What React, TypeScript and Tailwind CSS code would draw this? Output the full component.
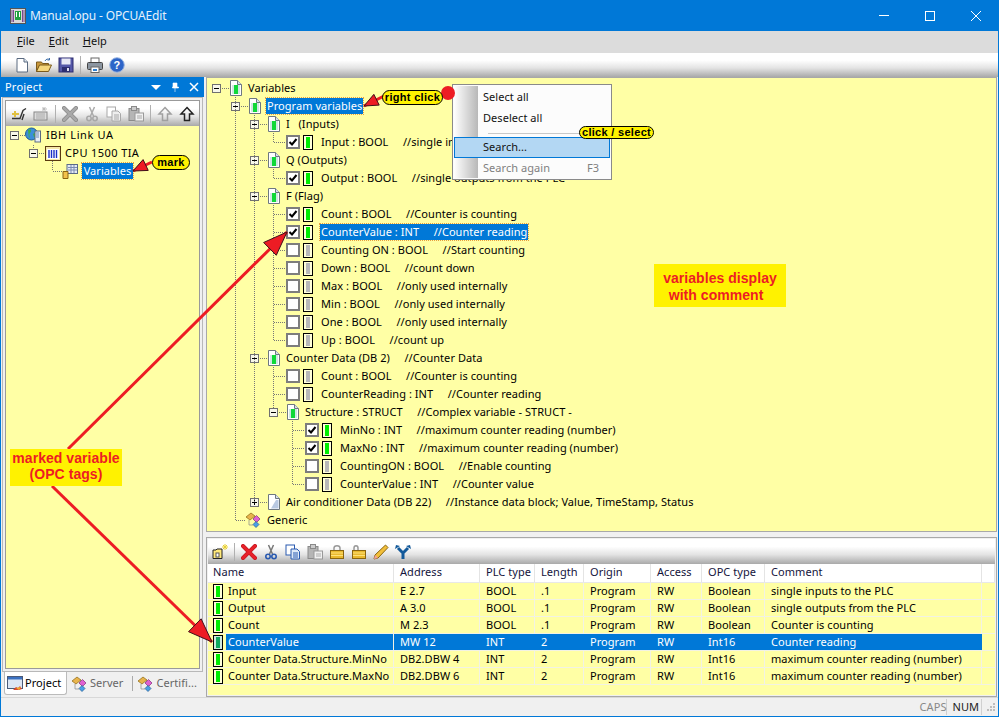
import React from "react";

const Y = "bg-[#ffffa5]";
const TB = "bg-[linear-gradient(180deg,#ffffff_0%,#ffffff_30%,#e4e4e4_62%,#a9a9a9_100%)]";

function Svg({ children, className = "w-4 h-4 shrink-0" }: { children: React.ReactNode; className?: string }) {
  return <svg viewBox="0 0 16 16" className={className}>{children}</svg>;
}

const NewIc = () => (
  <Svg><path d="M3 1.500h7l3.500 3.500v10H3z" fill="#fff" stroke="#5a6a80" /><path d="M10 1.500V5h3.500" fill="#dfe8f2" stroke="#5a6a80" /></Svg>
);
const OpenIc = () => (
  <Svg><path d="M.5 5h5l1 1.500h6v2h-9l-3 6z" fill="#c9973a" stroke="#7a5a1c" /><path d="M.5 14.500l3-6.500h12l-3 6.500z" fill="#f5d67b" stroke="#7a5a1c" /><path d="M9 4c1-2 3-2.500 4.500-1.500M13.500 1v2h-2" fill="none" stroke="#3f6fa8" /></Svg>
);
const SaveIc = () => (
  <Svg><rect x="1" y="1" width="14" height="14" fill="#5558a8" stroke="#2c2d70" /><rect x="3.500" y="1.500" width="9" height="6" fill="#e8e8f4" /><rect x="4" y="10" width="8" height="5" fill="#2c2d70" /><rect x="9" y="11" width="2" height="3" fill="#dde" /></Svg>
);
const PrintIc = () => (
  <Svg><rect x="4" y="1" width="8" height="5" fill="#fff" stroke="#666" /><rect x=".5" y="5.500" width="15" height="7" rx="1" fill="#8b95a0" stroke="#444" /><rect x="4" y="10" width="8" height="5.500" fill="#fff" stroke="#666" /><rect x="6" y="12" width="4" height="2" fill="#2e7fd0" /></Svg>
);
const HelpIc = () => (
  <Svg><circle cx="8" cy="8" r="7.300" fill="#2c64c8" stroke="#9db6e0" /><text x="8" y="12" textAnchor="middle" fontSize="11" fontWeight="700" fontFamily="Liberation Sans" fill="#fff">?</text></Svg>
);
const ConnectIc = () => (
  <Svg><path d="M1 8h7M4 5v6" stroke="#e0c040" strokeWidth="2" /><path d="M1 12.500h8l3-8 3-2M11 14l2-6" stroke="#333" strokeWidth="1.400" fill="none" /></Svg>
);
const GreyNewIc = () => (
  <Svg><rect x="1" y="6" width="13" height="8" fill="#ddd" stroke="#888" /><path d="M3 8h9M3 10h9M3 12h9" stroke="#aaa" /><path d="M11 1v4M9 3h5M9.500 1.500l3 3M12.500 1.500l-3 3" stroke="#bbb" /></Svg>
);
const XIc = ({ c = "#a8a8a8", d = "#888" }: { c?: string; d?: string }) => (
  <Svg><path d="M2 2l12 12M14 2L2 14" stroke={d} strokeWidth="4" strokeLinecap="round" /><path d="M2 2l12 12M14 2L2 14" stroke={c} strokeWidth="2.600" strokeLinecap="round" /></Svg>
);
const ScissorsIc = ({ c = "#a8a8a8" }: { c?: string }) => (
  <Svg><path d="M5.500 1l4 9M10.500 1l-4 9" stroke={c === "#a8a8a8" ? "#aaa" : "#777"} strokeWidth="1.500" /><circle cx="5" cy="12.500" r="2.200" fill="none" stroke={c} strokeWidth="1.600" /><circle cx="11" cy="12.500" r="2.200" fill="none" stroke={c} strokeWidth="1.600" /></Svg>
);
const CopyIc = ({ c = "#a8a8a8", f = "#eee" }: { c?: string; f?: string }) => (
  <Svg><rect x="1" y="1" width="8.500" height="10" fill="#fff" stroke={c} /><path d="M6 5h6l2.500 2.500V15H6z" fill={f} stroke={c} /><path d="M8 9h5M8 11h5M8 13h5" stroke={c} /></Svg>
);
const PasteIc = () => (
  <Svg><rect x="1" y="2.500" width="10" height="12" fill="#b5b5b5" stroke="#8a8a8a" /><rect x="3.500" y=".5" width="5" height="4" fill="#ccc" stroke="#8a8a8a" /><rect x="7" y="7" width="8.500" height="8" fill="#f0f0f0" stroke="#999" /><path d="M9 10h5M9 12h5" stroke="#aaa" /></Svg>
);
const UpIc = ({ c = "#a0a0a0", f = "none" }: { c?: string; f?: string }) => (
  <Svg><path d="M8 1.500L14 8h-3.500v6.500h-5V8H2z" fill={f} stroke={c} strokeWidth="1.500" /></Svg>
);
const NewFolderIc = () => (
  <Svg><path d="M1 6h3l1-1h5v9.500H1z" fill="#ffe97a" stroke="#222" /><rect x="4" y="9" width="3" height="4" fill="#fff" stroke="#555" /><path d="M13 0v6M10 3h6M11 1l4 4M15 1l-4 4" stroke="#e8d030" /></Svg>
);
const LockIc = ({ open = false }: { open?: boolean }) => (
  <Svg><path d={open ? "M3 7V4c0-3 4-3 4 0v3" : "M5 7V4c0-3 6-3 6 0v3"} fill="none" stroke="#999" strokeWidth="1.500" /><rect x="1.500" y="6.500" width="13" height="8" fill="#e9b92d" stroke="#8a6510" /><path d="M2 9h12M2 11.500h12" stroke="#ffe27a" /></Svg>
);
const PencilIc = () => (
  <Svg><path d="M12.500 1L15 3.500 5 14l-4 1 1-4z" fill="#f2bf3a" stroke="#8a6510" /><path d="M2 11l3 3-4 1z" fill="#f0a0a0" /></Svg>
);
const ForkIc = () => (
  <Svg><path d="M8 15V9L3 4M8 9l5-5" stroke="#12599a" strokeWidth="3" fill="none" /><path d="M0 5l1-4 4 1zM16 5l-1-4-4 1z" fill="#12599a" /></Svg>
);
const TriDown = () => <div className="w-0 h-0 border-x-[5px] border-x-transparent border-t-[5px] border-t-white" />;

const TreeDoc = ({ green = true }: { green?: boolean }) => (
  <svg viewBox="0 0 12 16" className="w-[12px] h-[16px] shrink-0">
    <path d="M.5.5h7l4 4v11H.5z" fill="#fff" stroke="#6e7880" />
    <path d="M7.500.5v4h4" fill="#d8e0ea" stroke="#6e7880" />
    {green ? (
      <>
        <rect x="2" y="5" width="8" height="9" fill="#cfe7e3" />
        <rect x="4" y="5" width="4" height="9" fill="#10d838" />
      </>
    ) : (
      <path d="M8 6h2.500v8.500H3z" fill="#b9c9e2" />
    )}
  </svg>
);

const Expander = ({ plus = false }: { plus?: boolean }) => (
  <div className="relative w-[9px] h-[9px] shrink-0 border border-[#707070] bg-[#f7f7ea]">
    <div className="absolute left-[1px] right-[1px] top-[3px] h-[1px] bg-black" />
    {plus && <div className="absolute top-[1px] bottom-[1px] left-[3px] w-[1px] bg-black" />}
  </div>
);

const Check = ({ on }: { on: boolean }) => (
  <div className="w-[14px] h-[14px] shrink-0 border-[2px] border-[#7d7d7d] bg-white flex items-center justify-center">
    {on && (
      <svg viewBox="0 0 10 10" className="w-[10px] h-[10px]"><path d="M1.500 5l2.500 2.500L8.500 2" fill="none" stroke="#000" strokeWidth="2" /></svg>
    )}
  </div>
);

const VarBox = ({ on, selected }: { on: boolean; selected?: boolean }) => (
  <div className={`w-[10px] h-[15px] shrink-0 border border-black flex justify-center py-[1px] ${selected ? "bg-[#cfe9e0]" : "bg-[#ffffd8]"}`}>
    <div className={`w-[4px] ${selected ? "bg-[#0fa860]" : on ? "bg-[#00ee00]" : "bg-[#b8b8b8]"}`} />
  </div>
);

type Row =
  | { t: "node"; pl: string; text: string; selected?: boolean; plus?: boolean; plain?: boolean }
  | { t: "leaf"; pl: string; text: string; on: boolean; selected?: boolean }
  | { t: "generic"; pl: string; text: string };

const L0 = "pl-[5px]";
const L1 = "pl-[24px]";
const L2 = "pl-[43px]";
const L3 = "pl-[62px]";
const LA = "pl-[79px]";
const LB = "pl-[98px]";

const rows: Row[] = [
  { t: "node", pl: L0, text: "Variables" },
  { t: "node", pl: L1, text: "Program variables", selected: true },
  { t: "node", pl: L2, text: "I   (Inputs)" },
  { t: "leaf", pl: LA, text: "Input : BOOL     //single inputs to the PLC", on: true },
  { t: "node", pl: L2, text: "Q (Outputs)" },
  { t: "leaf", pl: LA, text: "Output : BOOL     //single outputs from the PLC", on: true },
  { t: "node", pl: L2, text: "F (Flag)" },
  { t: "leaf", pl: LA, text: "Count : BOOL     //Counter is counting", on: true },
  { t: "leaf", pl: LA, text: "CounterValue : INT     //Counter reading", on: true, selected: true },
  { t: "leaf", pl: LA, text: "Counting ON : BOOL     //Start counting", on: false },
  { t: "leaf", pl: LA, text: "Down : BOOL     //count down", on: false },
  { t: "leaf", pl: LA, text: "Max : BOOL     //only used internally", on: false },
  { t: "leaf", pl: LA, text: "Min : BOOL     //only used internally", on: false },
  { t: "leaf", pl: LA, text: "One : BOOL     //only used internally", on: false },
  { t: "leaf", pl: LA, text: "Up : BOOL     //count up", on: false },
  { t: "node", pl: L2, text: "Counter Data (DB 2)     //Counter Data" },
  { t: "leaf", pl: LA, text: "Count : BOOL     //Counter is counting", on: false },
  { t: "leaf", pl: LA, text: "CounterReading : INT     //Counter reading", on: false },
  { t: "node", pl: L3, text: "Structure : STRUCT     //Complex variable - STRUCT -" },
  { t: "leaf", pl: LB, text: "MinNo : INT     //maximum counter reading (number)", on: true },
  { t: "leaf", pl: LB, text: "MaxNo : INT     //maximum counter reading (number)", on: true },
  { t: "leaf", pl: LB, text: "CountingON : BOOL     //Enable counting", on: false },
  { t: "leaf", pl: LB, text: "CounterValue : INT     //Counter value", on: false },
  { t: "node", pl: L2, text: "Air conditioner Data (DB 22)     //Instance data block; Value, TimeStamp, Status", plus: true, plain: true },
  { t: "generic", pl: "pl-[39px]", text: "Generic" },
];

const TreeText = ({ text, selected }: { text: string; selected?: boolean }) => (
  <span className={`h-[16px] leading-[16px] px-[1px] whitespace-pre ${selected ? "bg-[#0078d7] text-white outline outline-1 outline-dotted outline-[#e8a040]" : "text-black"}`}>{text}</span>
);

const GenericIc = () => (
  <svg viewBox="0 0 16 16" className="w-4 h-4 shrink-0">
    <path d="M0 5l5-4 4 3-5 4z" fill="#e9b44c" stroke="#8a6510" strokeWidth=".7" />
    <path d="M7 7l3.500-3.500L14 7l-3.500 3.500z" fill="#e060d0" stroke="#80307a" strokeWidth=".7" />
    <path d="M7 12.500l3-3 3 3-3 3z" fill="#4aa0e8" stroke="#205a90" strokeWidth=".7" />
    <path d="M3 8v5h4" fill="none" stroke="#888" strokeWidth=".7" />
  </svg>
);

const listRows = [
  ["Input", "E 2.7", "BOOL", ".1", "Program", "RW", "Boolean", "single inputs to the PLC"],
  ["Output", "A 3.0", "BOOL", ".1", "Program", "RW", "Boolean", "single outputs from the PLC"],
  ["Count", "M 2.3", "BOOL", ".1", "Program", "RW", "Boolean", "Counter is counting"],
  ["CounterValue", "MW 12", "INT", "2", "Program", "RW", "Int16", "Counter reading"],
  ["Counter Data.Structure.MinNo", "DB2.DBW 4", "INT", "2", "Program", "RW", "Int16", "maximum counter reading (number)"],
  ["Counter Data.Structure.MaxNo", "DB2.DBW 6", "INT", "2", "Program", "RW", "Int16", "maximum counter reading (number)"],
];
const COLS = "grid grid-cols-[186px_86px_55px_49px_67px_51px_63px_217px_1fr]";
const heads = ["Name", "Address", "PLC type", "Length", "Origin", "Access", "OPC type", "Comment", ""];

function head(x1: number, y1: number, x2: number, y2: number, len: number, w: number) {
  const a = Math.atan2(y2 - y1, x2 - x1);
  const bx = x2 - Math.cos(a) * len;
  const by = y2 - Math.sin(a) * len;
  const nx = -Math.sin(a) * w;
  const ny = Math.cos(a) * w;
  return `${x2},${y2} ${bx + nx},${by + ny} ${bx - nx},${by - ny}`;
}

const Arrow = ({ x1, y1, x2, y2, len = 24, w = 9, sw = 3 }: { x1: number; y1: number; x2: number; y2: number; len?: number; w?: number; sw?: number }) => (
  <g>
    <line x1={x1} y1={y1} x2={x2} y2={y2} stroke="#ed1c24" strokeWidth={sw} />
    <polygon points={head(x1, y1, x2, y2, len, w)} fill="#ed1c24" stroke="#40101a" strokeWidth="1" />
  </g>
);

const dotted = { stroke: "#777", strokeWidth: 1, strokeDasharray: "1 1", shapeRendering: "crispEdges" as const };
const lines: [number, number, number, number][] = [
  [235.5, 97, 235.5, 520],
  [235.5, 520.5, 246, 520.5],
  [254.5, 115, 254.5, 502],
  [273.5, 133, 273.5, 142],
  [273.5, 142.5, 286, 142.5],
  [273.5, 169, 273.5, 178],
  [273.5, 178.5, 286, 178.5],
  [273.5, 205, 273.5, 340],
  [273.5, 214.5, 286, 214.5],
  [273.5, 232.5, 286, 232.5],
  [273.5, 250.5, 286, 250.5],
  [273.5, 268.5, 286, 268.5],
  [273.5, 286.5, 286, 286.5],
  [273.5, 304.5, 286, 304.5],
  [273.5, 322.5, 286, 322.5],
  [273.5, 340.5, 286, 340.5],
  [273.5, 367, 273.5, 408],
  [273.5, 376.5, 286, 376.5],
  [273.5, 394.5, 286, 394.5],
  [292.5, 421, 292.5, 484],
  [292.5, 430.5, 305, 430.5],
  [292.5, 448.5, 305, 448.5],
  [292.5, 466.5, 305, 466.5],
  [292.5, 484.5, 305, 484.5],
  [220, 88.5, 230, 88.5],
  [239, 106.5, 249, 106.5],
  [258, 124.5, 268, 124.5],
  [258, 160.5, 268, 160.5],
  [258, 196.5, 268, 196.5],
  [258, 358.5, 268, 358.5],
  [258, 502.5, 268, 502.5],
  [277, 412.5, 287, 412.5],
  [18, 135.5, 25, 135.5],
  [33.5, 145, 33.5, 150],
  [37, 153.5, 45, 153.5],
  [52.5, 161, 52.5, 171],
  [52.5, 171.5, 62, 171.5],
];

const Pill = ({ className, children }: { className: string; children: React.ReactNode }) => (
  <div className={`absolute flex items-center justify-center rounded-full bg-[#fff200] border border-black font-['Liberation_Sans',sans-serif] font-bold text-[11px] tracking-[0.3px] text-black ${className}`}>{children}</div>
);

export default function App() {
  return (
    <div className="relative w-[999px] h-[717px] overflow-hidden flex flex-col border-x border-b border-[#0078d7] bg-[#f0f0f0] font-['Noto_Sans',sans-serif] text-[11px] tracking-[0.05px] text-black">
      {/* Title bar */}
      <div className="h-[31px] shrink-0 bg-[#0078d7] flex items-center text-white">
        <svg viewBox="0 0 16 16" className="w-4 h-4 ml-[9px]">
          <rect x=".5" y=".5" width="15" height="15" fill="#d8d8d8" stroke="#555" />
          <path d="M2 2v12M3.500 2v12M12.500 2v12M14 2v12" stroke="#7a4a90" />
          <rect x="5" y="3" width="6" height="9" fill="#20a040" />
          <path d="M6 4v5h1V4zM9 4v5h1V4z" fill="#fff" />
        </svg>
        <span className="ml-[4px] text-[12px] tracking-[-0.15px] text-[#e6f1fb]">Manual.opu - OPCUAEdit</span>
        <div className="ml-auto flex h-full">
          <div className="w-[46px] flex items-center justify-center"><div className="w-[10px] h-[1px] bg-white" /></div>
          <div className="w-[46px] flex items-center justify-center"><div className="w-[10px] h-[10px] border border-white" /></div>
          <div className="w-[45px] flex items-center justify-center">
            <svg viewBox="0 0 10 10" className="w-[10px] h-[10px]"><path d="M0 0l10 10M10 0L0 10" stroke="#fff" /></svg>
          </div>
        </div>
      </div>
      {/* Menu */}
      <div className="h-[22px] shrink-0 bg-[#dcdcdc] flex items-center pb-[1px] pl-[16px] gap-[14px] text-[#111]">
        <span><u>F</u>ile</span>
        <span><u>E</u>dit</span>
        <span><u>H</u>elp</span>
      </div>
      {/* Toolbar */}
      <div className={`h-[24px] shrink-0 ${TB} flex items-center pl-[13px] gap-[6px]`}>
        <NewIc /><OpenIc /><SaveIc />
        <div className="w-[1px] h-[18px] bg-[#b0b0b0]" />
        <PrintIc /><HelpIc />
      </div>
      {/* Main */}
      <div className="flex-1 min-h-0 flex">
        {/* Left */}
        <div className="w-[203px] shrink-0 flex flex-col">
          <div className="h-[20px] shrink-0 bg-[#0078d7] text-white flex items-center pl-[4px] pr-[5px]">
            <span className="tracking-[0.2px]">Project</span>
            <div className="ml-auto flex items-center gap-[9px]">
              <TriDown />
              <svg viewBox="0 0 10 10" className="w-[10px] h-[10px]"><path d="M3 1h4v4h1.500v1h-6V5H3zM5 6v4" fill="#fff" stroke="#fff" strokeWidth=".6" /></svg>
              <svg viewBox="0 0 10 10" className="w-[10px] h-[10px]"><path d="M1 1l8 8M9 1L1 9" stroke="#fff" strokeWidth="1.500" /></svg>
            </div>
          </div>
          <div className="flex-1 min-h-0 ml-[1px] mr-[1px] border border-[#b8b8b8] p-[2px] flex flex-col">
            <div className="flex-1 min-h-0 flex flex-col border border-[#9a9a9a]">
              <div className={`h-[25px] shrink-0 ${TB} flex items-center pl-[5px] gap-[6px]`}>
                <ConnectIc /><GreyNewIc />
                <div className="w-[1px] h-[18px] bg-[#b0b0b0]" />
                <XIc /><ScissorsIc /><CopyIc /><PasteIc />
                <div className="w-[1px] h-[18px] bg-[#b0b0b0]" />
                <UpIc /><UpIc c="#222" />
              </div>
              <div className={`flex-1 min-h-0 ${Y}`}>
                <div className="h-[18px] flex items-center pl-[4px]">
                  <Expander />
                  <svg viewBox="0 0 16 16" className="w-4 h-4 ml-[6px]">
                    <circle cx="6.500" cy="7" r="6" fill="#3b8fd8" stroke="#1e5a98" />
                    <path d="M3 3c3-2 4 1 2 3s1 4-1 5zM8 7c2-2 4-1 4 1s-2 3-3 2z" fill="#3fae49" />
                    <rect x="10" y="4" width="5.500" height="11" fill="#e8eef6" stroke="#5a6a80" />
                    <path d="M11 6h3M11 8h3M11 10h3" stroke="#6a88b8" />
                  </svg>
                  <span className="ml-[4px] px-[1px] leading-[16px] tracking-[0.6px]">IBH Link UA</span>
                </div>
                <div className="h-[18px] flex items-center pl-[23px]">
                  <Expander />
                  <svg viewBox="0 0 16 16" className="w-4 h-4 ml-[7px]">
                    <rect x=".5" y="1.500" width="15" height="14" fill="#f5e8a8" stroke="#5a3a10" />
                    <rect x="2" y="4" width="12" height="10" fill="#fff" />
                    <path d="M4 5v8M6.500 5v8M9 5v8M11.500 5v8" stroke="#1d30c8" strokeWidth="1.400" />
                  </svg>
                  <span className="ml-[3px] px-[1px] leading-[16px] tracking-[0.4px]">CPU 1500 TIA</span>
                </div>
                <div className="h-[18px] flex items-center pl-[56px]">
                  <svg viewBox="0 0 16 16" className="w-4 h-4">
                    <rect x="5" y="1.500" width="10.500" height="9" fill="#e4eaf4" stroke="#5a6a88" />
                    <path d="M6 4.500h9M6 7h9M9 2v8M12 2v8" stroke="#7a8ab0" />
                    <path d="M1 8.500h5v7H1z" fill="#f2c24a" stroke="#8a6510" />
                  </svg>
                  <span className="ml-[4px] w-[51px] text-center h-[16px] leading-[16px] bg-[#0078d7] text-white outline outline-1 outline-dotted outline-[#e8a040]">Variables</span>
                </div>
              </div>
            </div>
          </div>
          <div className="h-[25px] shrink-0 flex items-start pl-[3px] text-[#666]">
            <div className="h-[23px] w-[63px] bg-white border border-t-0 border-[#bbb] rounded-b-[3px] flex items-center pl-[2px] gap-[2px] text-black">
              <svg viewBox="0 0 16 16" className="w-4 h-4 shrink-0">
                <rect x=".5" y="1.500" width="15" height="12" fill="#dce6f4" stroke="#4a5a78" />
                <rect x="1" y="2" width="14" height="2.500" fill="#3a70c0" />
                <path d="M6 15l3-3 2 1 2-2 2 3-3 1z" fill="#d84a30" />
                <path d="M9 13l3 2 2-3z" fill="#f0b030" />
              </svg>
              <span>Project</span>
            </div>
            <div className="flex items-center h-[23px] pl-[5px] gap-[2px]">
              <GenericIc /><span>Server</span>
              <div className="ml-[7px] w-[1px] h-[15px] bg-[#aaa]" />
            </div>
            <div className="flex items-center h-[23px] pl-[5px] gap-[2px]">
              <GenericIc /><span>Certifi...</span>
            </div>
          </div>
        </div>
        {/* Right */}
        <div className="flex-1 min-w-0 ml-[2px] mr-[1px] flex flex-col">
          <div className={`h-[455px] shrink-0 border border-[#a8a8a8] ${Y} pt-[1px]`}>
            {rows.map((r, i) =>
              r.t === "node" ? (
                <div key={i} className={`h-[18px] flex items-center ${r.pl}`}>
                  <Expander plus={r.plus} />
                  <div className="w-[9px] shrink-0" />
                  <TreeDoc green={!r.plain} />
                  <div className="w-[5px] shrink-0" />
                  <TreeText text={r.text} selected={r.selected} />
                </div>
              ) : r.t === "leaf" ? (
                <div key={i} className={`h-[18px] flex items-center ${r.pl}`}>
                  <Check on={r.on} />
                  <div className="w-[3px] shrink-0" />
                  <VarBox on={r.on} />
                  <div className="w-[7px] shrink-0" />
                  <TreeText text={r.text} selected={r.selected} />
                </div>
              ) : (
                <div key={i} className={`h-[18px] flex items-center ${r.pl}`}>
                  <GenericIc />
                  <div className="w-[4px] shrink-0" />
                  <TreeText text={r.text} />
                </div>
              )
            )}
          </div>
          <div className="h-[5px] shrink-0" />
          <div className="flex-1 min-h-0 border border-[#a8a8a8] p-[1px] flex flex-col">
            <div className={`h-[25px] shrink-0 ${TB} flex items-center pl-[4px] gap-[6px]`}>
              <NewFolderIc />
              <div className="w-[1px] h-[18px] bg-[#b0b0b0]" />
              <XIc c="#e8202a" d="#c01820" />
              <ScissorsIc c="#2a5ab0" />
              <CopyIc c="#2a5ab0" f="#dfe9f8" />
              <PasteIc />
              <LockIc />
              <LockIc open />
              <PencilIc />
              <ForkIc />
            </div>
            <div className={`h-[19px] shrink-0 bg-white ${COLS} text-[#14143c] border-b border-[#e8e8e8]`}>
              {heads.map((h, i) => (
                <div key={i} className={`${i === 0 ? "pl-[5px]" : "pl-[6px]"} border-r border-[#e4e4e4] leading-[16px] whitespace-nowrap`}>{h}</div>
              ))}
            </div>
            <div className={`flex-1 min-h-0 ${Y}`}>
              {listRows.map((r, i) => {
                const sel = i === 3;
                return (
                  <div key={i} className={`h-[17px] ${COLS} border-b border-[#f2f2e4]`}>
                    <div className="flex items-center pl-[5px] border-r border-[#f2f2e4]">
                      <VarBox on selected={sel} />
                      <div className={`ml-[3px] flex-1 h-full pl-[2px] leading-[16px] whitespace-nowrap ${sel ? "bg-[#0078d7] text-white" : ""}`}>{r[0]}</div>
                    </div>
                    {r.slice(1).map((c, j) => (
                      <div key={j} className={`pl-[6px] leading-[16px] whitespace-nowrap border-r ${sel ? "bg-[#0078d7] text-white border-[#0078d7]" : "border-[#f2f2e4]"}`}>{c}</div>
                    ))}
                    <div />
                  </div>
                );
              })}
            </div>
          </div>
        </div>
      </div>
      {/* Status */}
      <div className="h-[19px] shrink-0 border-t border-[#d8d8d8] flex items-center justify-end pr-[1px]">
        <span className="text-[#888] border-r border-[#d0d0d0] h-[16px] leading-[16px]">CAPS</span>
        <span className="text-[#222] pl-[5px] pr-[2px] border-r border-[#d0d0d0] h-[16px] leading-[16px]">NUM</span>
        <svg viewBox="0 0 12 12" className="w-[12px] h-[12px] ml-[3px]">
          <path d="M8 2h2v2H8zM5 5h2v2H5zM8 5h2v2H8zM2 8h2v2H2zM5 8h2v2H5zM8 8h2v2H8z" fill="#bdbdbd" />
        </svg>
      </div>

      {/* Context menu */}
      <div className="absolute left-[451px] top-[84px] w-[160px] h-[96px] bg-[#fcfcfc] border border-[#8a8a8a] flex">
        <div className="absolute left-[1px] top-[1px] bottom-[1px] w-[24px] bg-[linear-gradient(90deg,#ffffff,#b8b8b8)]" />
        <div className="relative flex-1 flex flex-col text-[#111]">
          <div className="h-[21px] mt-[2px] pl-[30px] leading-[20px]">Select all</div>
          <div className="h-[21px] pl-[30px] leading-[20px]">Deselect all</div>
          <div className="h-[8px] flex items-center pl-[35px] pr-[2px]"><div className="flex-1 h-[1px] bg-[#c8c8c8]" /></div>
          <div className="h-[21px] ml-[1px] mr-[1px] pl-[28px] bg-[#b3d7f3] border border-[#0078d7] leading-[17px]">Search...</div>
          <div className="h-[21px] pl-[30px] pr-[12px] flex justify-between text-[#808080] leading-[19px]"><span>Search again</span><span>F3</span></div>
        </div>
      </div>

      {/* Annotations */}
      <svg className="absolute left-[-1px] top-0 w-[999px] h-[717px] pointer-events-none" viewBox="0 0 999 717">
        {lines.map(([a, b, c, d], i) => (
          <line key={i} x1={a} y1={b} x2={c} y2={d} {...dotted} />
        ))}
        <Arrow x1={68} y1={449} x2={287} y2={232} />
        <Arrow x1={52} y1={486} x2={212} y2={642} />
        <Arrow x1={152} y1={162} x2={133} y2={171} len={14} w={6} sw={3} />
        <Arrow x1={384} y1={96} x2={364} y2={106} len={14} w={6} sw={3} />
        <circle cx="448" cy="93" r="7" fill="#ed1c24" />
      </svg>
      <Pill className="left-[151px] top-[155px] w-[38px] h-[15px]">mark</Pill>
      <Pill className="left-[381px] top-[90px] w-[61px] h-[15px]">right click</Pill>
      <Pill className="left-[578px] top-[126px] w-[75px] h-[13px]">click / select</Pill>
      <div className="absolute left-[9px] top-[449px] w-[112px] h-[37px] bg-[#fff200] text-[#ed1c24] font-['Liberation_Sans',sans-serif] font-bold text-[14px] leading-[16px] text-center pt-[1px]">
        marked variable<br />(OPC tags)
      </div>
      <div className="absolute left-[653px] top-[264px] w-[132px] h-[43px] bg-[#fff200] text-[#ed1c24] font-['Liberation_Sans',sans-serif] font-bold text-[14px] leading-[17px] text-center pt-[6px]">
        variables display<br />with comment{"\u00a0\u00a0"}
      </div>
    </div>
  );
}
